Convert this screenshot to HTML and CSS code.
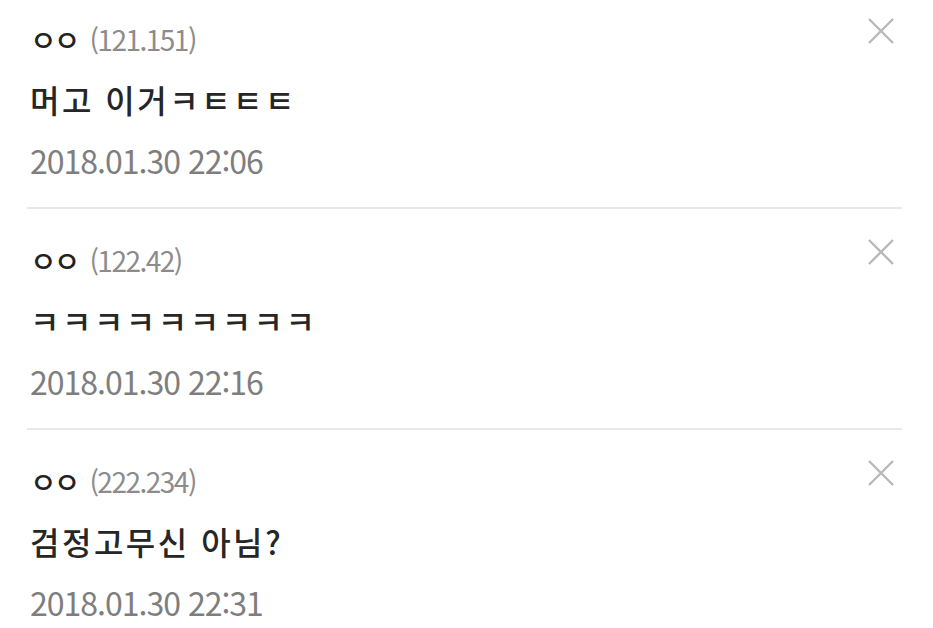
FILE: index.html
```html
<!DOCTYPE html>
<html lang="ko">
<head>
    <meta charset="UTF-8">
    <meta name="viewport" content="width=device-width, initial-scale=1.0">
    <title>댓글</title>
    <link rel="stylesheet" href="styles.css">
</head>
<body>
    <ul class="comment-list">
        <li class="comment">
            <div class="comment-head">
                <span class="nick">ㅇㅇ</span>
                <span class="ip">(121.151)</span>
                <button class="delete" aria-label="삭제">
                    <svg viewBox="0 0 28 28" width="28" height="28"><path d="M2 2 L26 26 M26 2 L2 26"/></svg>
                </button>
            </div>
            <p class="comment-text">머고 이거ㅋㅌㅌㅌ</p>
            <p class="comment-date">2018.01.30 22:06</p>
        </li>
        <li class="comment">
            <div class="comment-head">
                <span class="nick">ㅇㅇ</span>
                <span class="ip">(122.42)</span>
                <button class="delete" aria-label="삭제">
                    <svg viewBox="0 0 28 28" width="28" height="28"><path d="M2 2 L26 26 M26 2 L2 26"/></svg>
                </button>
            </div>
            <p class="comment-text">ㅋㅋㅋㅋㅋㅋㅋㅋㅋ</p>
            <p class="comment-date">2018.01.30 22:16</p>
        </li>
        <li class="comment">
            <div class="comment-head">
                <span class="nick">ㅇㅇ</span>
                <span class="ip">(222.234)</span>
                <button class="delete" aria-label="삭제">
                    <svg viewBox="0 0 28 28" width="28" height="28"><path d="M2 2 L26 26 M26 2 L2 26"/></svg>
                </button>
            </div>
            <p class="comment-text">검정고무신 아님?</p>
            <p class="comment-date">2018.01.30 22:31</p>
        </li>
    </ul>
</body>
</html>
```

FILE: styles.css
```css
body {
    margin: 0;
    background-color: #fff;
    font-family: "Noto Sans CJK KR", "Noto Sans", sans-serif;
    color: #222;
}

.comment-list {
    list-style: none;
    margin: 0 31px 0 27px;
    padding: 0;
}

.comment {
    padding: 21px 0 16px 3px;
    border-bottom: 2px solid #e8e8e8;
}

.comment:first-child {
    padding-top: 9px;
}

.comment:last-child {
    border-bottom: none;
}

.comment-head {
    display: flex;
    align-items: center;
    height: 60px;
}

.nick {
    font-size: 29px;
    font-weight: 500;
    color: #222;
    letter-spacing: -3px;
}

.ip {
    margin-left: 12px;
    font-size: 28px;
    color: #8c8c8c;
    letter-spacing: -1.5px;
}

.delete {
    align-self: flex-start;
    margin: 8px 7px 0 auto;
    padding: 0;
    border: none;
    background: none;
    width: 28px;
    height: 28px;
    cursor: pointer;
}

.delete svg {
    display: block;
}

.delete path {
    stroke: #b8b8b8;
    stroke-width: 2.4;
    fill: none;
}

.comment-text {
    margin: 0;
    height: 60px;
    line-height: 60px;
    font-size: 32px;
    font-weight: 500;
    letter-spacing: 2.5px;
    color: #262626;
}

.comment-date {
    margin: 0;
    height: 62px;
    line-height: 62px;
    font-size: 32px;
    color: #7e7e7e;
    letter-spacing: -1px;
}
```
